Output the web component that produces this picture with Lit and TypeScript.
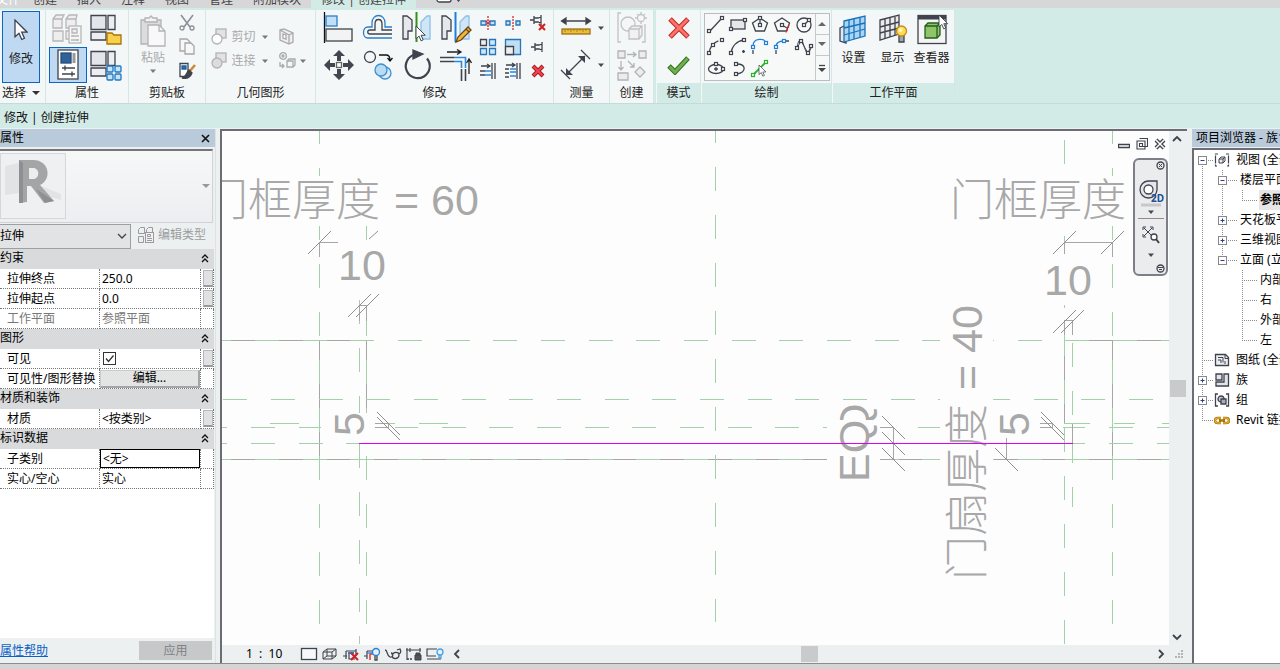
import { LitElement, html, svg, css, nothing, TemplateResult } from "lit";
import { customElement, property } from "lit/decorators.js";

type Art = TemplateResult | TemplateResult[];

const icon = (w: number, h: number, body: Art) =>
  html`<svg class="ic" width=${w} height=${h} viewBox="0 0 ${w} ${h}" fill="none" stroke="#3f434d" stroke-width="1.3" aria-hidden="true">${body}</svg>`;

const arrow = (color = "#444a55") =>
  html`<svg class="ic" width="6" height="4" viewBox="0 0 6 4" aria-hidden="true"><path d="M0 .5h6L3 4z" fill=${color} /></svg>`;

const node = (x: number, y: number, c = "#3f434d") =>
  svg`<rect x=${x - 1.5} y=${y - 1.5} width="3" height="3" fill="#fff" stroke=${c} stroke-width="1.2"/>`;

const cursor = (x: number, y: number, s = 1) =>
  svg`<path transform="translate(${x} ${y}) scale(${s})" d="M0 0v16l3.8-3.4 2.6 6 2.6-1.2-2.6-5.8h5.2z" fill="#fff" stroke="#3a3f4a" stroke-width="1.2"/>`;

const panes = svg`<path d="M1 2.500v14h15v-14z" fill="#e3e5ea"/><path d="M18 2.500h7v14h-7zM1 19h15v8h-15z" fill="#eceef1"/>`;

const ART: Record<string, TemplateResult> = {
  pointer: icon(14, 24, cursor(1, 1, 1.050)),
  families: icon(32, 32, svg`<g stroke="#b7b7b9" fill="#eeeeef"><path d="M1 6l3-4h8l-2 4v9H1zM14 6l3-4h8l-1 4v9h-10zM1 18h10v10H1zM14 18h8v8h-8z"/><path d="M1 6h9M14 6h10"/><rect x="17" y="13" width="12" height="17" fill="#f5f5f5"/><path d="M20 16h5v4h-5zM19 23h8M19 27h8M21 22v2M25 26v2"/></g>`),
  folder: icon(32, 32, svg`${panes}<path d="M17 20h5l2 2h7v9H17z" fill="#f8cf4f" stroke="#a87400"/>`),
  props: icon(24, 32, svg`<rect x="2" y="1" width="20" height="29" fill="#fff"/><rect x="5" y="4" width="10" height="10" fill="#2f6299" stroke="#244b78"/><path d="M18 4v10" stroke="#999" stroke-width="3"/><path d="M6 19h13M6 25h13M9 16.500v5M16 22.500v5"/>`),
  types: icon(32, 32, svg`${panes}<g fill="#c9e3f6" stroke="#1c78c4"><rect x="17" y="17" width="6" height="6" rx="1"/><rect x="25" y="17" width="6" height="6" rx="1"/><rect x="17" y="25" width="6" height="6" rx="1"/><rect x="25" y="25" width="6" height="6" rx="1"/></g>`),
  paste: icon(28, 32, svg`<g stroke="#b3b3b5"><path d="M2 5h20v24H2z" fill="#dcdcde"/><path d="M6 7V3h4l2-2 2 2h4v4z" fill="#f2f2f2"/><path d="M9 10h11l6 6v15H9z" fill="#f8f8f8"/><path d="M20 10v6h6"/></g>`),
  cut: icon(18, 18, svg`<g stroke="#8d9099"><path d="M3 1l9 12M15 1L6 13" stroke-width="1.600"/><circle cx="4" cy="14" r="2"/><circle cx="14" cy="14" r="2"/></g>`),
  copy: icon(18, 18, svg`<g stroke="#a7a7aa" fill="#f7f7f7"><path d="M2 1h7l3 3v9H2z"/><path d="M7 5h6l3 3v8H7z"/></g>`),
  match: icon(18, 18, svg`<path d="M2 1.500h8v13H2z" fill="#fff"/><path d="M4 4h4v3H4z" fill="#2673bd" stroke="#1d5fa0"/><path d="M17 3l-6 7" stroke="#c98a35" stroke-width="2.500"/><path d="M11 8l3 3c-2 5-6 6-10 5 4-1 4-5 7-8z" fill="#444" />`),
  geoCut: icon(18, 18, svg`<g stroke="#b3b3b5"><rect x="6" y="1" width="10" height="9" fill="#e2e2e4"/><circle cx="7" cy="11" r="5" fill="#fff"/></g>`),
  geoJoin: icon(18, 18, svg`<g stroke="#b3b3b5"><rect x="6" y="1" width="10" height="9" fill="#e2e2e4"/><circle cx="7" cy="11" r="5" fill="#dcdcde"/></g>`),
  geoFace: icon(18, 18, svg`<g stroke="#a9a9ac"><path d="M2 2l4-1 9 4v9l-4 2-9-4z" fill="#efeff0"/><path d="M11 7l4-2M11 7v9M2 2l9 5M5 6l3 1v4l-3-1z" fill="#fff"/></g>`),
  geoSplit: icon(18, 18, svg`<g stroke="#a9a9ac"><circle cx="5" cy="4" r="3.300"/><circle cx="5" cy="4" r="1"/><path d="M2 10v4h4M4 12l2 2-2 2"/><path d="M9 9l2-2h6v6l-2 2H9zM9 9h6v6"/></g>`),
  align: icon(32, 32, svg`<path d="M1.500 0v31" stroke="#111"/><rect x="3" y="4" width="11" height="10" fill="#c3dff5" stroke="#2a7fca"/><rect x="3" y="17" width="26" height="12" fill="#f2f3f5"/>`),
  offset: icon(32, 32, svg`<path d="M30 26H6c-6 0-6-11 0-11h4V11c0-10 13-10 13 0v4h7" stroke="#2a7fca"/><path d="M30 22H8c-3 0-3-4 0-4h5v-6c0-6 7-6 7 0v6h10"/>`),
  mirror: icon(32, 32, svg`<path d="M2 4h4l5 4v11H7v8H2z" fill="#e6e8ec"/><path d="M29 4h-3l-6 6v17h9z" fill="#cfe6f6" stroke="#8dc0e6"/><path d="M15.500 0v30" stroke="#2f9216" stroke-width="2"/>${cursor(15, 14, 0.800)}`),
  mirrorDraw: icon(32, 32, svg`<path d="M2 4h4l5 4v11H7v8H2z" fill="#e6e8ec"/><path d="M29 4h-3l-6 6v17h9z" fill="#cfe6f6" stroke="#8dc0e6"/><path d="M15.500 0v30" stroke="#1c7fe0" stroke-width="2"/><path d="M16 30l2-5 10-10 3 3-10 10z" fill="#f3b73b" stroke="#6b4510"/><path d="M26 17l3 3" stroke="#6b4510"/>`),
  move: icon(32, 32, svg`<g fill="#43464f" stroke="none"><path d="M16 1l6 6h-4v5h-4V7h-4zM16 31l6-6h-4v-5h-4v5h-4zM1 16l6-6v4h5v4H7v4zM31 16l-6-6v4h-5v4h5v4z"/></g><rect x="13.500" y="13.500" width="5" height="5" fill="#fff" stroke="#666"/>`),
  copyObj: icon(32, 32, svg`<circle cx="8" cy="8" r="5.500"/><path d="M17 6h7c3 0 4 2 4 5M25.500 9l2.500 3 2.500-3" stroke="#111"/><circle cx="23" cy="24" r="6" fill="#d7ebf9" stroke="#3e8fce"/><circle cx="19" cy="21" r="6" fill="#b9dcf4" stroke="#3e8fce"/>`),
  rotate: icon(32, 32, svg`<path d="M14 5.500a12 12 0 1 0 12 4" stroke-width="2.200"/><path d="M12 1l10 4-10 5z" fill="#3f434d"/>`),
  trim: icon(32, 32, svg`<path d="M7 3h13M17 .5L21 3l-4 2.500M29 25V11M26.500 14l2.500-4 2.500 4" stroke="#222"/><path d="M0 8.500h14M0 12.500h14M21.500 20v12M25.500 20v12" stroke-width="1.600"/><path d="M14 8.500h11.500V19M14 12.500h7.500V19" stroke="#2a88df" stroke-width="1.600"/>`),
  split: icon(18, 18, svg`<path d="M2 7h5v4H2zM11 7h5v4h-5z" fill="#c3e1f5" stroke="#2676b8"/><path d="M7 7l4 4M11 7L7 11M9 2v14" stroke="#d62c2c" stroke-dasharray="2 1"/>`),
  splitGap: icon(18, 18, svg`<path d="M2 7h4v4H2zM12 7h4v4h-4z" fill="#c3e1f5" stroke="#2676b8"/><path d="M9 2v14" stroke="#d62c2c" stroke-dasharray="2 1"/>`),
  unpin: icon(18, 18, svg`<path d="M1 6h4M5 2v8M5 4h4l3-1v6l-3-1H5M12 1v10"/><path d="M10 10l6 6M16 10l-6 6" stroke="#d51d1d" stroke-width="2"/>`),
  array: icon(18, 18, svg`<path d="M1.500 1.500h6v6h-6z" fill="#eee"/><g fill="#cfe7f7" stroke="#2676b8"><path d="M10.500 1.500h6v6h-6zM1.500 10.500h6v6h-6zM10.500 10.500h6v6h-6z"/></g>`),
  scale: icon(18, 18, svg`<path d="M1.500 1.500h15v15h-15z" fill="#bfdff5" stroke="#2676b8"/><path d="M1.500 8.500h8v8h-8z" fill="#eee"/>`),
  pin: icon(18, 18, svg`<path d="M2 9h4M6 5v8M6 7h4l3-1v6l-3-1H6M13 4v10"/>`),
  trimOne: icon(18, 18, svg`<path d="M2 4h8M8 2l3 2-3 2M13 1v16M16 1v16M1 9h5M1 13h5"/><path d="M6 9h6M6 13h6" stroke="#2a88df" stroke-width="1.600"/>`),
  trimMany: icon(18, 18, svg`<path d="M2 3h8M8 1l3 2-3 2M13 1v16M16 1v16M1 7h4M1 11h4M1 15h4"/><path d="M6 7h6M6 10h6M6 14h6" stroke="#2a88df" stroke-width="1.600"/>`),
  remove: icon(18, 18, svg`<path d="M4 4l10 10M14 4L4 14" stroke="#9f1820" stroke-width="4"/><path d="M4.500 4.500l9 9M13.500 4.500l-9 9" stroke="#f0444c" stroke-width="2.300"/>`),
  ruler: icon(32, 32, svg`<path d="M2 9h28M6 6L1.500 9 6 12zM26 6l4.500 3-4.500 3z" fill="#3f434d"/><rect x="2" y="17" width="28" height="5" fill="#edbd39" stroke="#9a7415"/><path d="M5 17v3M8 17v2M11 17v3M14 17v2M17 17v3M20 17v2M23 17v3M26 17v2" stroke="#9a7415" stroke-width=".8"/>`),
  dimension: icon(32, 32, svg`<path d="M6 26L25 7M1 21l9 9M21 1l9 9"/><path d="M6 26v-7l7 7zM25 7h-7l7 7z" fill="#3f434d" stroke="none"/>`),
  group: icon(32, 32, svg`<g stroke="#c2c2c5"><path d="M5 1H2v29h3M26 30h3V12"/><circle cx="12" cy="12" r="7"/><circle cx="25" cy="6" r="3.500"/><path d="M25 0v2M25 10v2M19 6h2M29 6h2M21 2l1 1M29 2l-1 1"/><path d="M13 17l3-3h10v9l-3 4H13zM13 17h10v10M23 17l3-3" fill="#f1f1f1"/></g>`),
  similar: icon(32, 32, svg`<g stroke="#b3b3b6"><path d="M2 2h7v7H2zM23 2h7v7h-7zM2 24h10v7H2zM24 18l5 5-5 5-5-5z" fill="#ececee"/><path d="M11 5.500h8M17 3l3 2.500L17 8M5 12v8M2.500 18L5 21l2.500-3M12 12l6 6M18 14v4h-4"/></g>`),
  cancel: icon(24, 24, svg`<path d="M3 3l18 18M21 3L3 21" stroke="#c2282c" stroke-width="5"/><path d="M3.500 3.500l17 17M20.500 3.500l-17 17" stroke="#fb7466" stroke-width="3"/>`),
  accept: icon(24, 20, svg`<path d="M2 11l6 6L21 3" stroke="#2f6f24" stroke-width="5"/><path d="M2.700 11.700L8 17 20.500 3.500" stroke="#6fb04e" stroke-width="3"/>`),
  dLine: icon(20, 20, svg`<path d="M4 16L16 3"/>${node(3, 16)}${node(16, 3)}`),
  dRect: icon(20, 20, svg`<rect x="3" y="5" width="14" height="9" fill="#e7e7ea"/>${node(3, 14)}${node(17, 5)}`),
  dPoly: icon(20, 20, svg`<path d="M10 3l7.500 5-3 8h-9l-3-8z"/><path d="M10 3v7"/>${node(10, 3)}${node(10, 10)}`),
  dPolyOut: icon(20, 20, svg`<path d="M10 3l7.500 5-3 8h-9l-3-8z"/><path d="M10 10l5 3"/><path d="M17 10l-3 8" stroke="#e02020" stroke-dasharray="3 1"/>${node(10, 10)}`),
  dCircle: icon(20, 20, svg`<circle cx="10" cy="10" r="7"/><path d="M10 10l4-4"/>${node(10, 10)}${node(15, 5)}`),
  dArc3: icon(20, 20, svg`<path d="M3 16C4 9 9 4 16 3" stroke-dasharray="7 2"/>${node(3, 16)}${node(7, 8)}${node(16, 3)}`),
  dArcC: icon(20, 20, svg`<path d="M3 16C4 9 9 4 16 3M14 14.500h3M15.500 13v3"/>${node(3, 16)}${node(16, 3)}`),
  dArcT: icon(20, 20, svg`<path d="M3 9c0-8 12-9 14-2" stroke="#1e80d8"/><path d="M3 13v4"/>${node(3, 10, "#1e80d8")}${node(16, 6, "#1e80d8")}`),
  dFillet: icon(20, 20, svg`<path d="M4 10c0-4 3-6 8-6" stroke="#1e80d8"/><path d="M4 13v4M14 4h3"/>${node(4, 10, "#1e80d8")}${node(12, 4, "#1e80d8")}`),
  dSpline: icon(20, 20, svg`<path d="M3 11C4 3 7 0 9 6s4 16 8 5" stroke-width="1"/><path d="M3 11l4-7 7 12 3-7" stroke-width="1"/>${node(3, 11)}${node(7, 4)}${node(14, 16)}${node(17, 9)}`),
  dEllipse: icon(20, 20, svg`<ellipse cx="10" cy="10" rx="7.500" ry="4.500"/><path d="M8 10h4M10 8v4"/>${node(10, 5)}${node(17, 10)}`),
  dHalf: icon(20, 20, svg`<path d="M9 5c9 0 10 8 0 10"/>${node(8, 5)}${node(8, 15)}`),
  dPick: icon(20, 20, svg`<path d="M3 16L16 3" stroke="#25b325" stroke-width="1.800"/>${node(3, 16, "#25b325")}${node(16, 3, "#25b325")}${cursor(9, 6, 0.600)}`),
  plane: icon(32, 32, svg`<path d="M2 14l6-3v18l-6-2z" fill="#e7e7ec"/><path d="M6 7l21-5v20L6 28z" fill="#a9d6f5" stroke="#1c70b8"/><path d="M11 6v21M16 5v20M22 3v20M6 14l21-5M6 21l21-6" stroke="#1c70b8"/>`),
  showPlane: icon(32, 32, svg`<path d="M3 6l19-5v19L3 26z" fill="#ebebee"/><path d="M8 5v20M13 4v19M18 3v18M3 13l19-5M3 19l19-5"/><path d="M22 20v8h5v-8" fill="#9aa" /><circle cx="24.500" cy="17" r="5" fill="#ffdf51" stroke="#c98a1b"/><circle cx="23.500" cy="16" r="2" fill="#fff8c9" stroke="none"/>`),
  viewer: icon(32, 32, svg`<rect x="2" y="1.500" width="28" height="28" fill="#f5f5f6"/><path d="M2 3.500h28" stroke-width="4"/><path d="M9 12l3-3h12v12l-3 3H9z" fill="#90c36a" stroke="#22601b"/><path d="M9 12h12v12M21 12l3-3" stroke="#22601b"/>${cursor(23, 1, 0.750)}`),
  editType: icon(18, 18, svg`<g stroke="#9a9a9c" stroke-width="1"><path d="M1.500 3.500l2-2h4v6h-6zM9.500 3.500l2-2h4v6h-6zM1.500 10.500h5v6h-5z"/><rect x="8.500" y="6.500" width="8" height="10" fill="#f2f2f2"/><path d="M10.500 8.500h3v2h-3zM10 12.500h5M10 14.500h5"/></g>`),
  tViews: icon(16, 16, svg`<path d="M4 2H1.500v12H4M12 2h2.500v12H12" stroke-width="1.200" stroke-dasharray="3 1 8 1 3"/><path d="M5 7l2-2h4v4l-2 2H5zM5 7h4v4M9 7l2-2" stroke-width="1" fill="#eee"/>`),
  tSheet: icon(16, 16, svg`<path d="M1.500 2.500h10l3 3v8h-13z" fill="#eceef0"/><path d="M11 2.500v4h4M4 5.500h5v5M4 8h3v3M11 9v3" stroke-width="1"/>`),
  tFamily: icon(16, 16, svg`<path d="M2 2h6v6H2z" fill="#e3e5ea"/><path d="M10 2h4.500v12H2v-4h8z" fill="#e3e5ea"/>`),
  tGroup: icon(16, 16, svg`<path d="M4 2H1.500v12H4M12 2h2.500v12H12"/><circle cx="7" cy="7" r="3" fill="#ccd"/><path d="M7 7h5v5H7z" fill="#aab"/>`),
  tLink: icon(16, 16, svg`<path d="M7 6H3.500a2.300 2.300 0 0 0 0 5H7M9 6h3.500a2.300 2.300 0 0 1 0 5H9M5 8.500h6" stroke="#a9750a" stroke-width="2.600"/><path d="M7 6H3.500a2.300 2.300 0 0 0 0 5H7M9 6h3.500a2.300 2.300 0 0 1 0 5H9" stroke="#f3c33c" stroke-width="1"/>`),
  vSheet: icon(18, 14, svg`<rect x="1.500" y="1.500" width="15" height="11" fill="#f8f8fa"/>`),
  vBox: icon(18, 14, svg`<path d="M2 5l4-3h9v7l-4 3H2zM2 5h9v7M11 5l4-3M6 2v7h9M6 9l-4 3" stroke-width="1"/>`),
  vCrop: icon(18, 14, svg`<path d="M1 9h4M4 4v8M4 4h10v5M7 7v5h6M14 2v3" stroke-width="1.200"/><path d="M6 6h6" stroke="#2a7fd0" stroke-width="2"/><path d="M9 6l7 7M16 6l-7 7" stroke="#d31f26" stroke-width="2"/>`),
  vShow: icon(18, 14, svg`<path d="M1 9h3M4 4v8M4 4h6" stroke-width="1.200"/><path d="M7 7v6M7 7h3" stroke="#e33" stroke-width="1.500"/><path d="M4 6h6" stroke="#2a7fd0"/><circle cx="13" cy="5" r="3.500" fill="#dff1ff" stroke="#2a7fd0"/><path d="M12 9v4h2V9"/>`),
  vGlasses: icon(18, 14, svg`<path d="M1 3c3 0 1 5 5 7 3 1 4-4 1-4M8 9c1 4 7 3 7-1s-6-3-7 0M15 7c2-1 2-3 1-5l-3 1"/>`),
  vLock: icon(18, 14, svg`<path d="M1 3h15M2 1v12M15 1v4M5 1v4" stroke-width="1.100"/><path d="M2 12h6" stroke-dasharray="2 1"/><path d="M10 8h6v5h-6zM11 8V6h4v2" fill="#555" stroke-width="1"/>`),
  vHint: icon(18, 14, svg`<path d="M11 2H1v7h9M1 12h14" stroke-width="1.200"/><circle cx="14" cy="5" r="3" fill="#dff1ff" stroke="#4d9ede"/><path d="M13 8v3h2V8" stroke="#4d9ede"/>`),
  chevL: icon(8, 10, svg`<path d="M6 1L2 5l4 4" stroke-width="1.800"/>`),
  chevR: icon(8, 10, svg`<path d="M2 1l4 4-4 4" stroke-width="1.800"/>`),
  chevU: icon(10, 8, svg`<path d="M1 6l4-4 4 4" stroke-width="1.800"/>`),
  chevD: icon(10, 8, svg`<path d="M1 2l4 4 4-4" stroke-width="1.800"/>`),
  fold: icon(8, 9, svg`<path d="M1 4l3-3 3 3M1 8l3-3 3 3" stroke="#111" stroke-width="1.300"/>`),
  close: icon(9, 9, svg`<path d="M1 1l7 7M8 1L1 8" stroke="#111" stroke-width="1.600"/>`),
};

const reset = css`
  :host { box-sizing: border-box; font: 12px/16px "Noto Sans", "Noto Sans CJK SC", sans-serif; color: #222; }
  *, *::before, *::after { box-sizing: border-box; }
  button, input, select { font: inherit; color: inherit; margin: 0; padding: 0; border: 0; background: none; border-radius: 0; }
  button { display: inline-flex; align-items: center; justify-content: center; white-space: nowrap; }
  .ic { display: block; flex: none; }
`;

const tool = (name: string, label: string, cls = "") =>
  html`<button class=${cls} aria-label=${label} title=${label}>${ART[name]}</button>`;

@customElement("ribbon-bar")
class RibbonBar extends LitElement {
  static styles = [reset, css`
    :host { display: block; background: #d3ebe6; }
    .tabs { display: flex; align-items: flex-end; height: 8px; overflow: hidden; background: #d7d7d9; }
    .tabs button { flex: none; padding: 0 10px; color: #444; }
    .tabs .file { width: 23px; padding: 0 3px 0 0; justify-content: flex-end; color: #fff; }
    .tabs .on { background: #d3ebe6; }
    .tabs .mini { padding: 0 0 4px; margin-left: 20px; }
    .ribbon { display: flex; height: 96px; padding-top: 2px; border-bottom: 1px solid #c5dbd8; }
    .panel { flex: none; display: flex; flex-direction: column; background: #f4f7f7; border-right: 1px solid #d3e8e4; }
    .body { flex: 1; min-height: 0; display: flex; justify-content: center; align-items: center; }
    .label { height: 20px; line-height: 20px; text-align: center; }
    .ctx .label { background: #d3ebe6; }
    .ctx { border-left: 1px solid #f4f7f7; }
    .select { width: 46px; } .props { width: 83px; } .clip { width: 77px; } .geo { width: 110px; }
    .edit { width: 238px; } .measure { width: 56px; } .create { width: 44px; }
    .mode { width: 45px; margin-left: 2px; } .draw { width: 131px; } .work { width: 123px; }
    .select .body { justify-content: flex-start; padding-left: 2px; }
    .select .label { display: flex; align-items: center; gap: 6px; padding-left: 2px; }
    .big { flex-direction: column; width: 38px; height: 72px; gap: 8px; padding-bottom: 8px; background: #bfd9f3; border: 1px solid #0a66c2; }
    .two { display: grid; grid-template-columns: 38px 38px; grid-template-rows: 36px 36px; }
    .two .on { background: #bfd9f3; border: 1px solid #0a66c2; }
    .paste { flex-direction: column; gap: 3px; width: 40px; padding-bottom: 6px; color: #a9a9ab; }
    .small { display: grid; grid-template-rows: repeat(3, 24px); width: 28px; }
    .geo .body { display: grid; grid-template-columns: 64px 32px; grid-auto-rows: 24px; align-content: center; padding: 4px 2px 0 0; gap: 0 4px; }
    .geo .body button { gap: 4px; color: #a9a9ab; justify-content: flex-start; }
    .geo .body button span { margin-right: 2px; }
    .large { display: grid; grid-template-columns: repeat(4, 39px); grid-template-rows: 37px 37px; }
    .nine { display: grid; grid-template-columns: repeat(3, 25px); grid-template-rows: repeat(3, 24px); }
    .stack { display: grid; grid-template-rows: 37px 37px; }
    .stack button { gap: 6px; }
    .gallery { display: flex; height: 68px; border: 1px solid #b9bcc0; background: #f7f9f9; }
    .shapes { display: grid; grid-template-columns: repeat(5, 22px); grid-template-rows: repeat(3, 22px); }
    .steps { display: grid; width: 14px; border-left: 1px solid #c6c9cc; }
    .steps button + button { border-top: 1px solid #c6c9cc; }
    .work .body { padding-right: 2px; }
    .work button { flex-direction: column; gap: 4px; width: 39px; height: 72px; padding-bottom: 17px; justify-content: flex-end; }
    .options { height: 24px; padding: 6px 4px 0; color: #111; }
  `];

  render() {
    const dis = "#77797f";
    const shapes = [["dLine", "线"], ["dRect", "矩形"], ["dPoly", "内接多边形"], ["dPolyOut", "外接多边形"], ["dCircle", "圆形"], ["dArc3", "起点-终点-半径弧"], ["dArcC", "圆心-端点弧"], ["dArcT", "相切-端点弧"], ["dFillet", "圆角弧"], ["dSpline", "样条曲线"], ["dEllipse", "椭圆"], ["dHalf", "半椭圆"], ["dPick", "拾取线"]];
    const large = [["align", "对齐"], ["offset", "偏移"], ["mirror", "镜像 - 拾取轴"], ["mirrorDraw", "镜像 - 绘制轴"], ["move", "移动"], ["copyObj", "复制"], ["rotate", "旋转"], ["trim", "修剪"]];
    const nine = [["split", "拆分图元"], ["splitGap", "用间隙拆分"], ["unpin", "解锁"], ["array", "阵列"], ["scale", "缩放"], ["pin", "锁定"], ["trimOne", "修剪单个图元"], ["trimMany", "修剪多个图元"], ["remove", "删除"]];
    return html`
      <nav class="tabs">
        <button class="file">文件</button>
        ${["创建", "插入", "注释", "视图", "管理", "附加模块"].map((t) => html`<button>${t}</button>`)}
        <button class="on">修改 | 创建拉伸</button>
        <button class="mini" aria-label="最小化功能区">${icon(26, 8, svg`<rect x="1" y="-4" width="14" height="10" rx="2" fill="#fff"/><path d="M20 3h5l-2.500 3z" fill="#444" stroke="none"/>`)}</button>
      </nav>
      <div class="ribbon">
        <section class="panel select">
          <div class="body"><button class="big">${ART.pointer}<span>修改</span></button></div>
          <div class="label">选择 ${icon(8, 4, svg`<path d="M0 0h8L4 4z" fill="#333" stroke="none"/>`)}</div>
        </section>
        <section class="panel props">
          <div class="body"><div class="two">${tool("families", "族类别")}${tool("folder", "族类型")}${tool("props", "属性", "on")}${tool("types", "类型属性")}</div></div>
          <div class="label">属性</div>
        </section>
        <section class="panel clip">
          <div class="body"><button class="paste">${ART.paste}<span>粘贴</span>${arrow(dis)}</button>
            <div class="small">${tool("cut", "剪切")}${tool("copy", "复制")}${tool("match", "匹配类型")}</div></div>
          <div class="label">剪贴板</div>
        </section>
        <section class="panel geo">
          <div class="body">
            <button>${ART.geoCut}<span>剪切</span>${arrow(dis)}</button>${tool("geoFace", "面")}
            <button>${ART.geoJoin}<span>连接</span>${arrow(dis)}</button><button aria-label="拆分面">${ART.geoSplit}${arrow(dis)}</button>
          </div>
          <div class="label">几何图形</div>
        </section>
        <section class="panel edit">
          <div class="body"><div class="large">${large.map(([a, b]) => tool(a, b))}</div><div class="nine">${nine.map(([a, b]) => tool(a, b))}</div></div>
          <div class="label">修改</div>
        </section>
        <section class="panel measure">
          <div class="body"><div class="stack"><button aria-label="测量">${ART.ruler}${arrow()}</button><button aria-label="尺寸标注">${ART.dimension}${arrow()}</button></div></div>
          <div class="label">测量</div>
        </section>
        <section class="panel create">
          <div class="body"><div class="stack">${tool("group", "创建组")}${tool("similar", "创建类似")}</div></div>
          <div class="label">创建</div>
        </section>
        <section class="panel ctx mode">
          <div class="body"><div class="stack">${tool("cancel", "取消")}${tool("accept", "完成")}</div></div>
          <div class="label">模式</div>
        </section>
        <section class="panel ctx draw">
          <div class="body"><div class="gallery">
            <div class="shapes">${shapes.map(([a, b]) => tool(a, b))}</div>
            <div class="steps">
              <button aria-label="上一行">${icon(8, 5, svg`<path d="M0 5h8L4 1z" fill="#666" stroke="none"/>`)}</button>
              <button aria-label="下一行">${icon(8, 5, svg`<path d="M0 0h8L4 4z" fill="#666" stroke="none"/>`)}</button>
              <button aria-label="展开">${icon(8, 8, svg`<path d="M1 1.500h6" stroke="#444"/><path d="M0 4h8L4 8z" fill="#444" stroke="none"/>`)}</button>
            </div></div></div>
          <div class="label">绘制</div>
        </section>
        <section class="panel ctx work">
          <div class="body"><button>${ART.plane}<span>设置</span></button><button>${ART.showPlane}<span>显示</span></button><button>${ART.viewer}<span>查看器</span></button></div>
          <div class="label">工作平面</div>
        </section>
      </div>
      <div class="options">修改 | 创建拉伸</div>`;
  }
}

interface PropRow { name: string; value?: string; kind?: "check" | "button" | "focus"; off?: boolean; side?: boolean }
const GROUPS: { title: string; rows: PropRow[] }[] = [
  { title: "约束", rows: [{ name: "拉伸终点", value: "250.0", side: true }, { name: "拉伸起点", value: "0.0", side: true }, { name: "工作平面", value: "参照平面", off: true }] },
  { title: "图形", rows: [{ name: "可见", kind: "check", side: true }, { name: "可见性/图形替换", value: "编辑...", kind: "button" }] },
  { title: "材质和装饰", rows: [{ name: "材质", value: "<按类别>", side: true }] },
  { title: "标识数据", rows: [{ name: "子类别", value: "<无>", kind: "focus" }, { name: "实心/空心", value: "实心" }] },
];

@customElement("property-palette")
class PropertyPalette extends LitElement {
  static styles = [reset, css`
    :host { display: flex; flex-direction: column; background: #ecf0f0; color: #000; border-right: 1px solid #dfe2e3; }
    header { flex: none; display: flex; align-items: center; justify-content: space-between; height: 18px; padding-right: 5px; background: #b9cadb; }
    .type { flex: none; display: flex; align-items: center; justify-content: space-between; height: 74px; margin: 2px 2px 0 0; padding: 3px 2px 4px 0; background: linear-gradient(#f6f8f8, #eceef1); border: 1px solid #d0d3d5; border-left: 0; border-top: 2px solid #74767c; }
    .thumb { display: flex; align-items: center; justify-content: center; width: 66px; height: 66px; border: 1px solid #d5d7d9; background: #eff0f1; }
    .filter { flex: none; display: flex; gap: 6px; height: 26px; align-items: center; }
    .combo { position: relative; width: 131px; height: 25px; }
    .combo select { appearance: none; width: 100%; height: 100%; border: 1px solid #9da0a3; border-left: 0; background: #e2e3e5; }
    .combo .ic { position: absolute; right: 4px; top: 9px; pointer-events: none; }
    .filter button { gap: 3px; padding-bottom: 3px; color: #9d9d9f; }
    .grid { flex: 1; min-height: 0; background: #fff; overflow: hidden; margin-right: 1px; }
    table { width: 100%; table-layout: fixed; border-collapse: separate; border-spacing: 0; }
    .c1 { width: 100px; } .c3 { width: 13px; }
    tr { height: 20px; }
    th, td { height: 20px; padding: 0; font-weight: normal; text-align: left; white-space: nowrap; overflow: hidden; vertical-align: middle; }
    .group th { background: #d8dadc; }
    .group div { display: flex; align-items: center; justify-content: space-between; padding: 0 5px 2px 0; }
    .row th { padding-left: 7px; }
    .row th, .row td { border-bottom: 1px dotted #777; border-right: 1px dotted #777; }
    .row input[type="text"] { display: block; width: 100%; height: 18px; padding: 0 0 1px 2px; }
    .off { color: #777; }
    .row .focus input { height: 19px; border: 1px solid #000; }
    .row .edit { display: flex; width: 100%; height: 18px; background: #e3e4e4; border: 1px solid #ccc; border-right: 2px solid #a5a5a7; border-bottom: 2px solid #a5a5a7; }
    input[type="checkbox"] { appearance: none; display: block; width: 13px; height: 13px; margin-left: 3px; border: 1px solid #333; background: #fff; }
    .tick { display: grid; width: 16px; }
    .tick > * { grid-area: 1 / 1; }
    .tick .ic { margin-left: 3px; pointer-events: none; }
    .side { display: block; width: 10px; height: 17px; margin-left: 2px; background: #dfe1e2; border: 1px solid #b5b7b9; border-bottom: 2px solid #98999b; }
    footer { flex: none; display: flex; align-items: center; justify-content: space-between; height: 25px; padding-right: 3px; }
    a { color: #0a62c9; }
    .apply { width: 73px; height: 19px; background: #c6c8ca; color: #808285; }
  `];

  cell(r: PropRow, id: string) {
    if (r.kind === "check") return html`<span class="tick"><input id=${id} type="checkbox" checked />${icon(13, 13, svg`<path d="M3 6.500l2.500 3L10.500 3.500" stroke="#333"/>`)}</span>`;
    if (r.kind === "button") return html`<button id=${id} class="edit">${r.value}</button>`;
    return html`<input id=${id} type="text" .value=${r.value ?? ""} ?readonly=${!!r.off} />`;
  }

  render() {
    return html`
      <header><span>属性</span><button aria-label="关闭">${ART.close}</button></header>
      <div class="type">
        <div class="thumb">${icon(60, 60, svg`<g stroke="none"><path d="M2 10l14-3v30L2 39zM38 30l20 8v6l-20-6z" fill="#e2e3e5"/><path d="M16 4h14c17 0 19 20 7 25l14 16-10 2-13-17h-4v16l-8 1z" fill="#a3a5a7"/><path d="M16 4l4 3v40h-4z" fill="#8d8f92"/><path d="M26 12v11h4c7 0 7-11 0-11z" fill="#eceded"/><path d="M33 33l18 12-9 2z" fill="#8d8f92"/></g>`)}</div>
        <button aria-label="类型选择器">${icon(8, 4, svg`<path d="M0 0h8L4 4z" fill="#96989c" stroke="none"/>`)}</button>
      </div>
      <div class="filter">
        <div class="combo"><select aria-label="属性过滤器"><option>拉伸</option></select>${icon(10, 7, svg`<path d="M1 1l4 4 4-4"/>`)}</div>
        <button>${ART.editType}<span>编辑类型</span></button>
      </div>
      <div class="grid"><table>
        <colgroup><col class="c1" /><col /><col class="c3" /></colgroup>
        ${GROUPS.map((g, gi) => html`<tbody>
          <tr class="group"><th colspan="3"><div><span>${g.title}</span><button aria-label="折叠">${ART.fold}</button></div></th></tr>
          ${g.rows.map((r, ri) => html`<tr class="row ${r.off ? "off" : ""}">
            <th><label for="p${gi}${ri}">${r.name}</label></th>
            <td class=${r.kind ?? ""}>${this.cell(r, `p${gi}${ri}`)}</td>
            <td>${r.side ? html`<button class="side" aria-label="关联族参数"></button>` : nothing}</td>
          </tr>`)}
        </tbody>`)}
      </table></div>
      <footer><a href="#help">属性帮助</a><button class="apply" disabled>应用</button></footer>`;
  }
}

const GREEN = "#a5d1a8";
const GREY = "#a6a6a6";
type Seg = [number, number, number];

const V_DASH: Seg[] = [
  [319, 120, 176], [319, 226, 624], [366, 226, 240], [366, 321, 413], [366, 456, 624],
  [1112, 120, 176], [1112, 226, 240], [1112, 264, 624],
];
const PHASED: { x: number; start: number; spans: [number, number][] }[] = [
  { x: 359, start: 300, spans: [[300, 413], [438, 644]] },
  { x: 715, start: 119, spans: [[119, 622]] },
  { x: 1064, start: 140, spans: [[140, 176], [236, 254], [305, 309], [332, 644]] },
  { x: 1072, start: 343, spans: [[343, 507]] },
];
const V_GREY: Seg[] = [
  [319, 243, 257], [359, 305, 321], [366, 305, 321], [1064, 243, 254], [1112, 243, 257],
  [1064, 320, 335], [1072, 320, 335], [1006, 438, 459], [893, 427, 459], [388, 423, 428], [1052, 423, 428], [1072, 424, 443],
];
const V_MIX: Seg[] = [[319, 341, 459], [366, 341, 408], [1112, 341, 459], [1064, 341, 423]];
const H_GREY: Seg[] = [
  [242, 319, 338], [242, 1064, 1112], [305, 359, 367], [320, 1064, 1073],
  [340, 231, 374], [340, 1065, 1162], [459, 222, 827], [459, 880, 940], [459, 993, 1162],
  [423, 375, 388], [427, 375, 389], [427, 880, 893], [423, 1040, 1052], [427, 1040, 1053],
];
const H_GREEN: { y: number; from: number; spans: [number, number][] }[] = [
  { y: 340, from: 207, spans: [[222, 940], [993, 1169]] },
  { y: 399, from: 223, spans: [[223, 940], [993, 1169]] },
  { y: 427, from: 203, spans: [[222, 321], [395, 827], [895, 940], [1063, 1169]] },
  { y: 443, from: 203, spans: [[222, 359], [1072, 1169]] },
  { y: 459, from: 207, spans: [[222, 827], [895, 940], [993, 1169]] },
];
const SHORT: Seg[] = [[423, 270, 299], [423, 388, 395], [423, 419, 448], [423, 1064, 1090], [423, 1114, 1135], [423, 1162, 1169]];
const TICKS: [number, number][] = [[319, 242], [359, 305], [367, 305], [1064, 242], [1112, 242], [1064, 321], [1072, 321]];
const BACK: [number, number][] = [[388, 423], [388, 428], [1052, 423], [1052, 428], [893, 427], [893, 443], [893, 459], [1006, 459]];

const vline = (x: number, a: number, b: number, c: string, dash = "none", off = 0) =>
  svg`<path d="M${x + 0.5} ${a}V${b}" stroke=${c} stroke-dasharray=${dash} stroke-dashoffset=${off}/>`;
const hline = (y: number, a: number, b: number, c: string, dash = "none", off = 0) =>
  svg`<path d="M${a} ${y + 0.5}H${b}" stroke=${c} stroke-dasharray=${dash} stroke-dashoffset=${off}/>`;

@customElement("drawing-view")
class DrawingView extends LitElement {
  static styles = [reset, css`
    :host { display: grid; grid-template-columns: minmax(0, 1fr) 18px; grid-template-rows: minmax(0, 1fr) 18px; background: #ecf0f0; border-left: 2px solid #6b6c74; border-top: 2px solid #6b6c74; }
    .sheet { position: relative; background: #fdfdfd; overflow: hidden; }
    .drawing { display: block; width: 100%; height: 100%; }
    .note { font: 43px "Liberation Sans", sans-serif; fill: #a8a8a8; }
    .han { font: 300 44px "Noto Sans CJK SC", sans-serif; }
    .win { position: absolute; top: 6px; right: 3px; display: flex; gap: 6px; }
    .nav { position: absolute; top: 27px; right: 1px; width: 35px; height: 118px; display: flex; flex-direction: column; align-items: center; border: 2px solid #7d7f88; border-radius: 6px; background: #eaeced; }
    .nav .end { align-self: flex-end; margin: 1px; }
    .nav .wheel { margin-top: 8px; }
    .nav .drop { height: 9px; }
    .nav .zoom { margin: 5px 0 6px; }
    .nav .rule { width: 26px; height: 1px; background: #98858e; margin: 2px 0; }
    .nav .bottom { margin-top: auto; }
    .vbar { display: flex; flex-direction: column; justify-content: space-between; align-items: center; padding: 4px 2px 4px 0; }
    .vthumb { width: 16px; height: 17px; background: #c9cacc; margin-left: 1px; }
    .status { display: flex; align-items: center; padding-left: 24px; }
    .scale { white-space: pre; color: #000; margin-right: 18px; }
    .tools { display: flex; gap: 3px; margin-right: 9px; }
    .hbar { flex: 1; display: flex; align-items: center; justify-content: space-between; padding-right: 4px; }
    .hthumb { width: 17px; height: 16px; background: #c9cacc; }
    .corner { display: flex; align-items: flex-end; justify-content: center; padding: 0 0 3px 2px; }
  `];

  render() {
    return html`
      <div class="sheet">
        <svg class="drawing" role="img" aria-label="门族立面图">
          <defs><clipPath id="cut"><rect x="830" y="400" width="50" height="20" /></clipPath></defs>
          <g transform="translate(-222 -131)" fill="none" stroke-width="1">
            ${V_MIX.map(([x, a, b]) => vline(x, a, b, GREY))}
            ${H_GREY.map(([y, a, b]) => hline(y, a, b, GREY))}
            ${V_DASH.map(([x, a, b]) => vline(x, a, b, GREEN, "24 24", a - 120))}
            ${PHASED.map((l) => l.spans.map(([a, b]) => vline(l.x, a, b, GREEN, "24 24", a - l.start)))}
            ${H_GREEN.map((l) => l.spans.map(([a, b]) => hline(l.y, a, b, GREEN, "24 24 24 24 24 23", a - l.from)))}
            ${SHORT.map(([y, a, b]) => hline(y, a, b, GREEN))}
            ${V_GREY.map(([x, a, b]) => vline(x, a, b, GREY))}
            ${TICKS.map(([x, y]) => svg`<path d="M${x - 11} ${y + 12}L${x + 12} ${y - 11}" stroke="#8f8f8f"/>`)}
            ${BACK.map(([x, y]) => svg`<path d="M${x - 11} ${y - 11}L${x + 12} ${y + 12}" stroke="#8f8f8f"/>`)}
            <path d="M369 239l9-8" stroke="#8f8f8f" />
            <g class="note" stroke="none">
              <text x="204" y="216" class="han">门框厚度</text>
              <text x="394" y="215">= 60</text>
              <text x="950" y="216" class="han">门框厚度</text>
              <text x="338" y="280">10</text>
              <text x="1044" y="295">10</text>
              <text transform="translate(364 436) rotate(-90)">5</text>
              <text transform="translate(1029 436) rotate(-90)">5</text>
              <text transform="translate(869 482) rotate(-90)">EQ</text>
              <g clip-path="url(#cut)"><text transform="translate(869 437) rotate(-90)">Q</text></g>
              <text class="han" transform="translate(983 580) rotate(-90)">门扇厚度</text>
              <text transform="translate(982 390) rotate(-90)">= 40</text>
            </g>
            <path d="M359 443.500H1073" stroke="#dc00f5" />
          </g>
        </svg>
        <div class="win">
          <button aria-label="最小化">${icon(12, 14, svg`<path d="M.5 7.500h11v3H.5z" fill="#fff"/>`)}</button>
          <button aria-label="还原">${icon(12, 14, svg`<path d="M3.500 1.500h8v8h-8M1 4h8v8H1zM3.500 6.500h3v3h-3z" stroke-width="1.100"/>`)}</button>
          <button aria-label="关闭">${icon(12, 14, svg`<path d="M2 3l8 8M10 3l-8 8" stroke-width="4"/><path d="M2 3l8 8M10 3l-8 8" stroke="#fff" stroke-width="1.500"/>`)}</button>
        </div>
        <div class="nav">
          <button class="end" aria-label="关闭导航栏">${icon(9, 9, svg`<circle cx="4.500" cy="4.500" r="3.500"/><path d="M3 3l3 3M6 3L3 6" stroke-width="1"/>`)}</button>
          <button class="wheel" aria-label="二维控制盘">${icon(26, 28, svg`<path d="M10 2h9v9a8.500 8.500 0 1 1-9-9z" fill="#e3e6ea"/><circle cx="10.500" cy="10.500" r="4.500" fill="#fff"/><path d="M3 26h20" stroke="#c6c8ca" stroke-width="3"/><text x="13" y="23" font-family="Noto Sans" font-size="10" font-weight="700" fill="#1c4f93" stroke="none">2D</text>`)}</button>
          <button class="drop" aria-label="控制盘选项">${arrow()}</button>
          <div class="rule"></div>
          <button class="zoom" aria-label="区域放大">${icon(18, 18, svg`<path d="M2 2l8 8M10 2l-8 8M1 4V1h3M8 1h3v3M1 8v3h3" stroke-width="1"/><circle cx="12" cy="11" r="3" fill="#fff"/><path d="M14 13l3 4" stroke-width="2"/>`)}</button>
          <button class="drop" aria-label="缩放选项">${arrow()}</button>
          <button class="end bottom" aria-label="自定义">${icon(9, 9, svg`<circle cx="4.500" cy="4.500" r="3.500"/><path d="M2 3.500h5M3 5.500h3" stroke-width="1"/>`)}</button>
        </div>
      </div>
      <div class="vbar"><button aria-label="向上滚动">${ART.chevU}</button><div class="vthumb"></div><button aria-label="向下滚动">${ART.chevD}</button></div>
      <div class="status">
        <button class="scale">1  :  10</button>
        <div class="tools">${[["vSheet", "详细程度"], ["vBox", "视觉样式"], ["vCrop", "裁剪视图"], ["vShow", "显示裁剪区域"], ["vGlasses", "临时隐藏"], ["vLock", "约束"], ["vHint", "临时视图属性"]].map(([a, b]) => tool(a, b))}</div>
        <div class="hbar"><button aria-label="向左滚动">${ART.chevL}</button><div class="hthumb"></div><button aria-label="向右滚动">${ART.chevR}</button></div>
      </div>
      <div class="corner">${icon(10, 10, svg`<g fill="#b5b3b6" stroke="none"><path d="M7 0h2v2H7zM7 3h2v2H7zM7 6h2v2H7zM4 3h2v2H4zM4 6h2v2H4zM1 6h2v2H1z"/></g>`)}</div>`;
  }
}

interface Branch { text: string; depth: 0 | 1 | 2; box?: "+" | "-"; art?: string; guides: string; last?: boolean; on?: boolean }
const TREE: Branch[] = [
  { text: "视图 (全部)", depth: 0, box: "-", art: "tViews", guides: "" },
  { text: "楼层平面", depth: 1, box: "-", guides: "0" },
  { text: "参照标高", depth: 2, guides: "01", last: true, on: true },
  { text: "天花板平面", depth: 1, box: "+", guides: "0" },
  { text: "三维视图", depth: 1, box: "+", guides: "0" },
  { text: "立面 (立面 1)", depth: 1, box: "-", guides: "0", last: true },
  { text: "内部", depth: 2, guides: "0" },
  { text: "右", depth: 2, guides: "0" },
  { text: "外部", depth: 2, guides: "0" },
  { text: "左", depth: 2, guides: "0", last: true },
  { text: "图纸 (全部)", depth: 0, art: "tSheet", guides: "" },
  { text: "族", depth: 0, box: "+", art: "tFamily", guides: "" },
  { text: "组", depth: 0, box: "+", art: "tGroup", guides: "" },
  { text: "Revit 链接", depth: 0, art: "tLink", guides: "", last: true },
];

@customElement("project-browser")
class ProjectBrowser extends LitElement {
  @property({ type: String }) heading = "项目浏览器 - 族1";
  static styles = [reset, css`
    :host { display: flex; flex-direction: column; overflow: hidden; color: #000; background: #ecf0f0; }
    header { flex: none; height: 18px; padding: 0 4px; line-height: 18px; white-space: nowrap; background: #b9cadb; }
    ul { flex: 1; margin: 1px 0 0; padding: 0; list-style: none; background: #fff; border-left: 2px solid #6b6c74; border-top: 2px solid #6b6c74; overflow: hidden; }
    li { display: flex; align-items: center; height: 20px; white-space: nowrap; }
    .kind { margin-right: 5px; }
    .name { padding: 0 1px; }
    .on { background: #e6e6e6; font-weight: 700; line-height: 20px; }
  `];

  guide(b: Branch, first: boolean) {
    const x = 8 + b.depth * 20;
    const w = b.depth === 0 ? 20 : b.depth === 1 ? 45 : 65;
    return html`<svg class="ic" width=${w} height="20" viewBox="0 0 ${w} 20" fill="none" stroke="#8c8c8c" aria-hidden="true">
      <g stroke-dasharray="1 1">
        ${[...b.guides].map((g) => svg`<path d="M${8.5 + Number(g) * 20} 0V20"/>`)}
        <path d="M${x + 0.5} ${first ? 10 : 0}V${b.last ? 10 : 20}" />
        <path d=${`M${x} 10.500H${w - 1}`} />
      </g>
      ${b.box ? svg`<rect x=${x - 3.5} y="6.500" width="8" height="8" fill="#fff" stroke="#888"/><path d="M${x - 1.5} 10.500h4${b.box === "+" ? "m-2 -2v4" : ""}" stroke="#2a3f8f"/>` : nothing}
    </svg>`;
  }

  render() {
    return html`<header>${this.heading}</header>
      <ul>${TREE.map((b, i) => html`<li>${this.guide(b, i === 0)}${b.art ? html`<span class="kind">${ART[b.art]}</span>` : nothing}<span class="name ${b.on ? "on" : ""}">${b.text}</span></li>`)}</ul>`;
  }
}

@customElement("app-root")
class AppRoot extends LitElement {
  static styles = [reset, css`
    :host { display: flex; flex-direction: column; height: 100vh; overflow: hidden; background: #ecf0f0; }
    ribbon-bar { flex: none; }
    main { flex: 1; min-height: 0; display: grid; grid-template-columns: 216px minmax(0, 1fr) 88px; padding-top: 1px; }
    drawing-view { margin: 0 5px 0 4px; }
    .strip { flex: none; height: 6px; background: #d5d5d5; border-top: 1px solid #8b8d8d; }
  `];
  render() {
    return html`<ribbon-bar></ribbon-bar>
      <main><property-palette></property-palette><drawing-view></drawing-view><project-browser></project-browser></main>
      <div class="strip"></div>`;
  }
}
